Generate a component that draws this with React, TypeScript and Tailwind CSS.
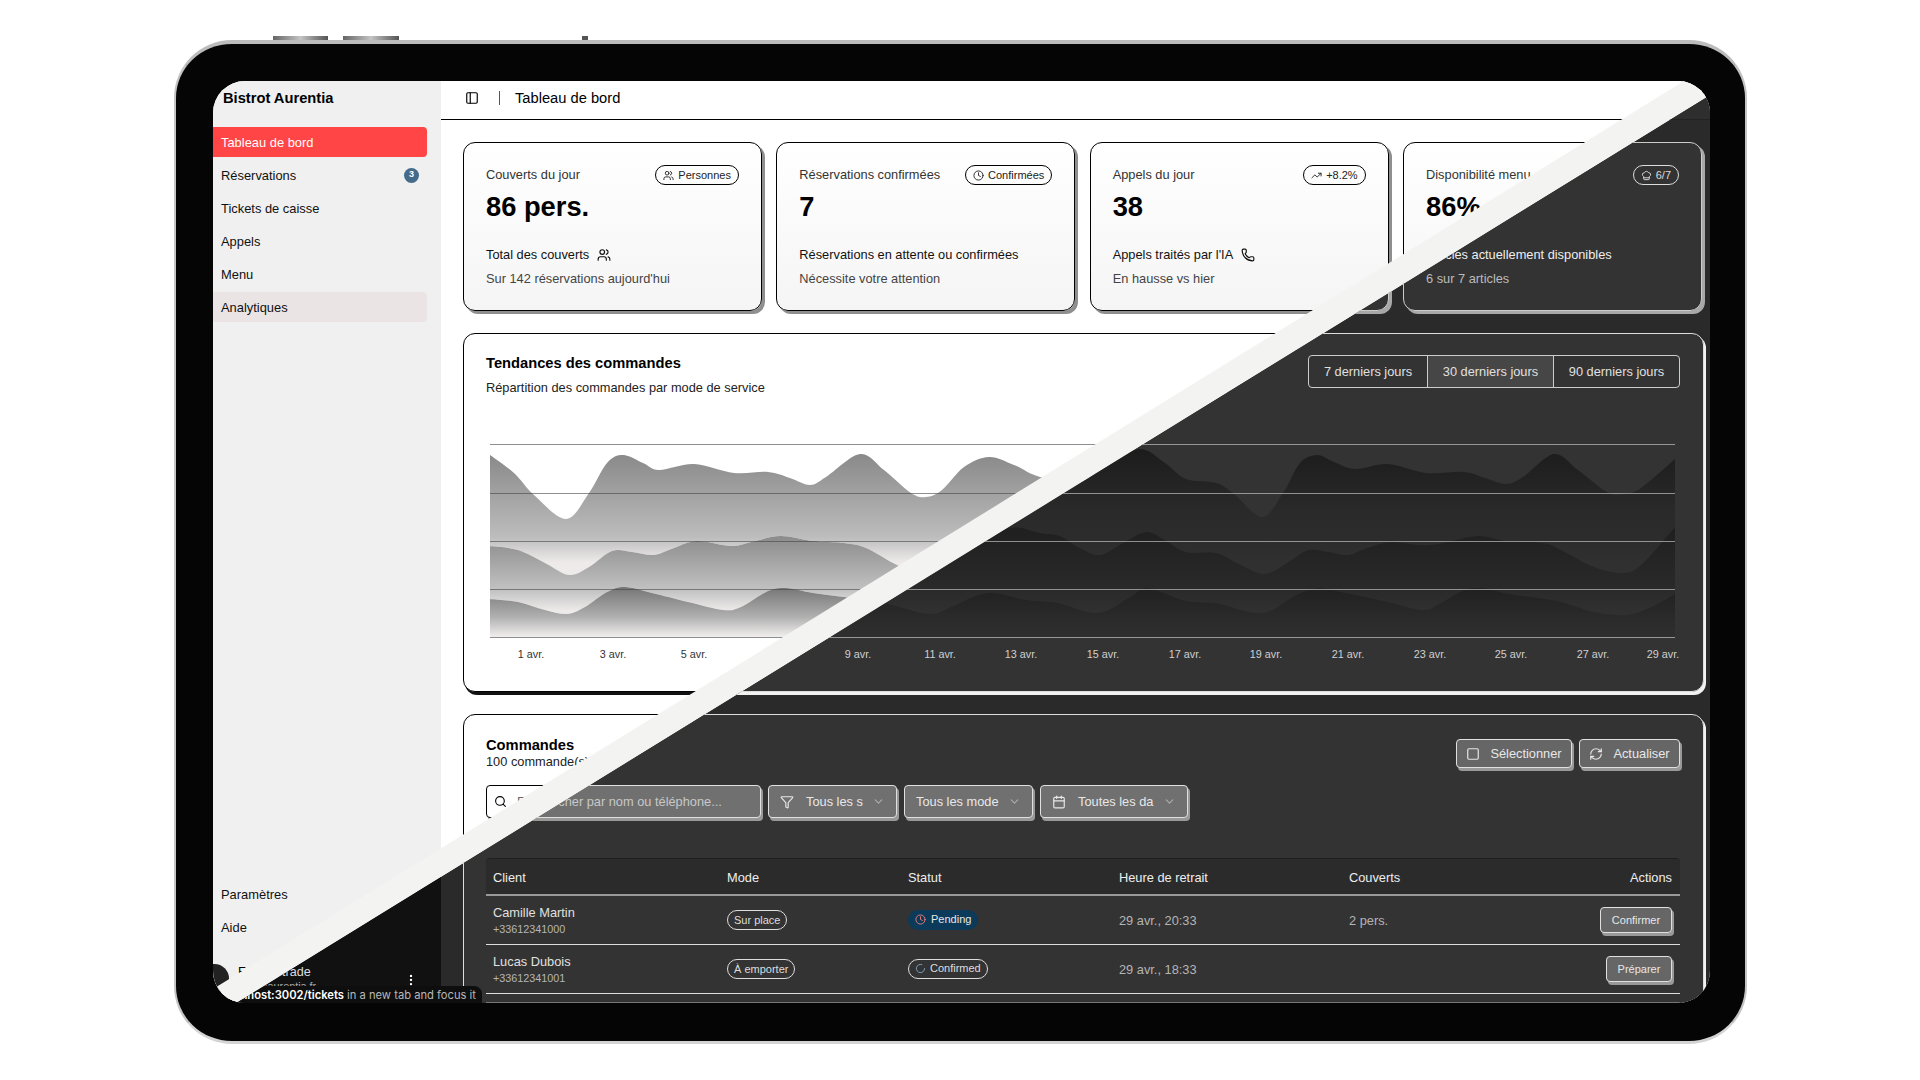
import {
  Calendar,
  ChefHat,
  ChevronDown,
  Clock,
  EllipsisVertical,
  Filter,
  LoaderCircle,
  PanelLeft,
  Phone,
  RefreshCw,
  Search,
  Square,
  TrendingUp,
  Users,
} from 'lucide-react'
import type { ReactNode } from 'react'

type Pt = [number, number]

const curveA: Pt[] = [[0, 11], [24, 29], [44, 51], [76, 75], [99, 49], [117, 19], [133, 11], [153, 19], [169, 26], [204, 20], [244, 29], [278, 28], [300, 34], [320, 41], [336, 33], [370, 10], [394, 26], [421, 49], [436, 53], [452, 46], [474, 23], [499, 13], [524, 21], [550, 33], [590, 38], [615, 20], [650, 5], [675, 19], [696, 35], [726, 39], [743, 49], [772, 73], [793, 49], [810, 19], [827, 11], [844, 18], [865, 25], [898, 20], [936, 29], [974, 28], [995, 34], [1016, 40], [1033, 33], [1064, 10], [1088, 26], [1117, 48], [1134, 50], [1151, 44], [1185, 15]]
const curveB: Pt[] = [[0, 102], [28, 106], [55, 119], [79, 131], [99, 123], [122, 107], [142, 108], [164, 111], [184, 104], [207, 97], [242, 102], [265, 97], [291, 92], [323, 97], [354, 99], [376, 104], [407, 121], [436, 132], [480, 105], [519, 84], [550, 89], [570, 92], [590, 104], [610, 111], [633, 99], [656, 88], [675, 96], [696, 108], [726, 109], [747, 119], [774, 130], [797, 119], [818, 106], [839, 108], [858, 111], [877, 104], [902, 98], [940, 101], [987, 92], [1016, 97], [1054, 99], [1075, 108], [1104, 123], [1132, 129], [1151, 121], [1185, 83]]
const curveC: Pt[] = [[0, 155], [28, 158], [55, 166], [77, 170], [95, 163], [117, 148], [135, 143], [162, 149], [198, 158], [233, 166], [251, 163], [278, 147], [296, 144], [323, 149], [354, 153], [394, 159], [439, 170], [461, 163], [497, 149], [537, 156], [568, 159], [608, 169], [640, 153], [658, 144], [696, 157], [726, 159], [772, 169], [806, 151], [829, 144], [856, 149], [894, 157], [932, 166], [949, 160], [974, 146], [993, 144], [1020, 150], [1067, 157], [1104, 168], [1136, 171], [1159, 164], [1185, 150]]

const ticks: [string, number][] = [['1 avr.', 41], ['3 avr.', 123], ['5 avr.', 204], ['7 avr.', 286], ['9 avr.', 368], ['11 avr.', 450], ['13 avr.', 531], ['15 avr.', 613], ['17 avr.', 695], ['19 avr.', 776], ['21 avr.', 858], ['23 avr.', 940], ['25 avr.', 1021], ['27 avr.', 1103], ['29 avr.', 1173]]

// catmull-rom to bezier, same smoothing feel as a monotone area chart
function smooth(pts: Pt[]) {
  let d = ''
  for (let i = 0; i < pts.length - 1; i++) {
    const p0 = pts[Math.max(i - 1, 0)]
    const p1 = pts[i]
    const p2 = pts[i + 1]
    const p3 = pts[Math.min(i + 2, pts.length - 1)]
    const c1x = p1[0] + (p2[0] - p0[0]) / 6
    const c1y = p1[1] + (p2[1] - p0[1]) / 6
    const c2x = p2[0] - (p3[0] - p1[0]) / 6
    const c2y = p2[1] - (p3[1] - p1[1]) / 6
    d += ` C${c1x} ${c1y} ${c2x} ${c2y} ${p2[0]} ${p2[1]}`
  }
  return d
}

function band(top: Pt[], bottom: Pt[]) {
  const rev = [...bottom].reverse()
  return `M${top[0][0]} ${top[0][1]}${smooth(top)} L${rev[0][0]} ${rev[0][1]}${smooth(rev)} Z`
}

function Chart({ dark }: { dark: boolean }) {
  const p = dark ? 'd' : 'l'
  const floor: Pt[] = [[0, 193], [1185, 193]]
  return (
    <svg width="1200" height="232" className="mt-[47px] ml-[26px] block overflow-visible">
      <defs>
        <linearGradient id={`${p}a`} gradientUnits="userSpaceOnUse" x1="0" y1="5" x2="0" y2="131">
          <stop offset="0" stopColor={dark ? '#1c1c1c' : '#868686'} />
          <stop offset="0.5" stopColor={dark ? '#2a2a2a' : '#adadad'} />
          <stop offset="0.7" stopColor={dark ? '#2c2c2c' : '#bdbdbd'} />
          <stop offset="0.9" stopColor={dark ? '#303030' : '#eeeaea'} />
        </linearGradient>
        <linearGradient id={`${p}b`} gradientUnits="userSpaceOnUse" x1="0" y1="88" x2="0" y2="171">
          <stop offset="0" stopColor={dark ? '#202020' : '#878787'} />
          <stop offset="0.7" stopColor={dark ? '#2a2a2a' : '#c2c2c2'} />
          <stop offset="0.95" stopColor={dark ? '#303030' : '#eeeaea'} />
        </linearGradient>
        <linearGradient id={`${p}c`} gradientUnits="userSpaceOnUse" x1="0" y1="143" x2="0" y2="193">
          <stop offset="0" stopColor={dark ? '#202020' : '#757575'} />
          <stop offset="0.6" stopColor={dark ? '#2a2a2a' : '#b0b0b0'} />
          <stop offset="1" stopColor={dark ? '#2f2f2f' : '#f2eeee'} />
        </linearGradient>
      </defs>
      <path d={band(curveA, curveB)} fill={`url(#${p}a)`} />
      <path d={band(curveB, curveC)} fill={`url(#${p}b)`} />
      <path d={band(curveC, floor)} fill={`url(#${p}c)`} />
      {[0, 49, 97, 145, 193].map((y) => (
        <line key={y} x1="0" x2="1185" y1={y + 0.5} y2={y + 0.5} stroke={dark ? '#d8d8d8' : '#444444'} strokeOpacity={0.6} />
      ))}
      {ticks.map(([label, x]) => (
        <text key={label} x={x} y="214" textAnchor="middle" fontSize="10.8" fill={dark ? '#d0d0d0' : '#333333'}>
          {label}
        </text>
      ))}
    </svg>
  )
}

function Badge({ dark, icon, compact, children }: { dark: boolean; icon?: ReactNode; compact?: boolean; children: ReactNode }) {
  return (
    <span className={`inline-flex h-5 items-center gap-1 rounded-full border text-[11px] whitespace-nowrap ${compact ? 'px-[6px]' : 'px-[7px]'} ${dark ? 'border-[#dddddd] text-[#dddddd]' : 'border-black text-[#222222]'}`}>
      {icon}
      {children}
    </span>
  )
}

function StatCard({ dark, title, value, badge, badgeIcon, line, lineIcon, sub }: {
  dark: boolean
  title: string
  value: string
  badge: string
  badgeIcon: ReactNode
  line: string
  lineIcon?: ReactNode
  sub: string
}) {
  return (
    <div className={`h-[169px] rounded-xl border px-[22px] pt-[23px] ${dark ? 'border-[#cccccc] bg-[#333333] shadow-[3px_3px_0_#a8a8a8]' : 'border-black bg-linear-to-b from-white to-[#f5f5f5] shadow-[3px_3px_0_#8f8f8f]'}`}>
      <div className="flex h-5 items-center justify-between">
        <span className={`-mt-[2px] text-[12.8px] ${dark ? 'text-[#cccccc]' : 'text-[#333333]'}`}>{title}</span>
        <span className="-mt-[1px]">
          <Badge dark={dark} icon={badgeIcon}>{badge}</Badge>
        </span>
      </div>
      <div className={`mt-[6px] h-[30px] text-[27.3px] leading-[30px] font-bold ${dark ? 'text-white' : 'text-black'}`}>{value}</div>
      <div className={`mt-[25px] flex h-4 items-center gap-2 text-[12.8px] ${dark ? 'text-[#eeeeee]' : 'text-[#111111]'}`}>
        <span>{line}</span>
        {lineIcon}
      </div>
      <div className={`mt-2 h-4 text-[12.8px] leading-4 ${dark ? 'text-[#bbbbbb]' : 'text-[#444444]'}`}>{sub}</div>
    </div>
  )
}

function NavItem({ label, state, badge, dark }: { label: string; state?: 'active' | 'soft'; badge?: string; dark: boolean }) {
  let tone = dark ? 'text-[#dddddd]' : 'text-[#111111]'
  if (state === 'active') tone = 'bg-[#ff4545] text-white'
  if (state === 'soft') tone = dark ? 'bg-[#2a2626] text-[#dddddd]' : 'bg-[#ebe4e4] text-[#111111]'
  return (
    <div className={`-ml-[4px] flex h-[30px] items-center justify-between rounded-[4px] pr-[8px] pl-[12px] text-[12.9px] ${tone}`}>
      <span className="pt-px">{label}</span>
      {badge && <span className="flex h-[15px] w-[15px] items-center justify-center rounded-full bg-[#456b8b] text-[9px] font-bold text-white">{badge}</span>}
    </div>
  )
}

function SelectBox({ dark, className, icon, label }: { dark: boolean; className: string; icon?: ReactNode; label: string }) {
  return (
    <div className={`flex h-[33px] items-center rounded-[4px] border px-[11px] text-[12.8px] ${className} ${dark ? 'border-[#e0e0e0] bg-[#707070] text-[#e8e8e8] shadow-[2px_3px_0_#999999]' : 'border-black bg-white text-black shadow-[2px_3px_0_#999999]'}`}>
      {icon}
      <span className="flex-1 pt-px whitespace-nowrap">{label}</span>
      <ChevronDown size={13} className="opacity-50" />
    </div>
  )
}

function ActionButton({ dark, className, children }: { dark: boolean; className: string; children: ReactNode }) {
  return (
    <div className={`flex items-center justify-center rounded-[4px] border ${className} ${dark ? 'border-[#e0e0e0] bg-[#666666] text-[#e8e8e8] shadow-[2px_3px_0_#999999]' : 'border-black bg-white text-black shadow-[2px_3px_0_#999999]'}`}>
      {children}
    </div>
  )
}

function OrderRow({ dark, name, phone, mode, status, time, covers, action, actionWidth }: {
  dark: boolean
  name: string
  phone: string
  mode: string
  status: ReactNode
  time: string
  covers: string
  action: string
  actionWidth: string
}) {
  return (
    <div className={`grid h-[49px] grid-cols-[234px_181px_211px_230px_1fr] items-center border-b text-[12.8px] ${dark ? 'border-[#dddddd]' : 'border-black'}`}>
      <div className="pt-px pl-[7px]">
        <div className={`leading-[16px] ${dark ? 'text-[#e0e0e0]' : 'text-black'}`}>{name}</div>
        <div className={`text-[10.8px] leading-[16px] ${dark ? 'text-[#b5b5b5]' : 'text-[#444444]'}`}>{phone}</div>
      </div>
      <div className="pl-[7px]">
        <Badge dark={dark} compact>{mode}</Badge>
      </div>
      <div className="pl-[7px]">{status}</div>
      <div className={`pt-px pl-[7px] ${dark ? 'text-[#b5b5b5]' : 'text-[#444444]'}`}>{time}</div>
      <div className="flex items-center pr-[8px]">
        <span className={`flex-1 pt-px pl-[7px] ${dark ? 'text-[#b5b5b5]' : 'text-[#444444]'}`}>{covers}</span>
        <ActionButton dark={dark} className={`h-[26px] text-[11px] ${actionWidth}`}>{action}</ActionButton>
      </div>
    </div>
  )
}

function Dashboard({ dark }: { dark: boolean }) {
  const text = dark ? 'text-white' : 'text-black'
  const muted = dark ? 'text-[#d0d0d0]' : 'text-[#222222]'
  const panel = dark
    ? 'border-[#dddddd] bg-[#333333] shadow-[2px_3px_0_#f2f2f2]'
    : 'border-black bg-white shadow-[2px_3px_0_#111111]'

  return (
    <div className={`flex h-[922px] w-[1497px] overflow-hidden ${dark ? 'bg-[#2a2a2a]' : 'bg-white'}`}>
      <aside className={`relative flex w-[228px] shrink-0 flex-col ${dark ? 'bg-[#111111]' : 'bg-[#f0f0f0]'}`}>
        <div className={`ml-[10px] flex h-[46px] items-start pt-[6px] text-[14.7px] font-bold ${text}`}>Bistrot Aurentia</div>
        <nav className="flex flex-col gap-[3px] pr-[14px]">
          <NavItem dark={dark} label="Tableau de bord" state="active" />
          <NavItem dark={dark} label="Réservations" badge="3" />
          <NavItem dark={dark} label="Tickets de caisse" />
          <NavItem dark={dark} label="Appels" />
          <NavItem dark={dark} label="Menu" />
          <NavItem dark={dark} label="Analytiques" state="soft" />
        </nav>
        <div className="mt-auto flex flex-col gap-[3px] pr-[14px]">
          <NavItem dark={dark} label="Paramètres" />
          <NavItem dark={dark} label="Aide" />
          <div className="mt-[19px] flex items-center pr-[9px] pb-[10px]">
            <div className={`-ml-[13px] h-[29px] w-[29px] shrink-0 rounded-full ${dark ? 'border border-[#555555] bg-[#333333]' : 'bg-[#222222]'}`} />
            <div className="ml-[9px] flex-1 pt-px">
              <div className={`text-[12.6px] leading-[15px] ${dark ? 'text-[#dddddd]' : 'text-black'}`}>Fred Estrade</div>
              <div className={`text-[10.8px] leading-[13px] ${dark ? 'text-[#aaaaaa]' : 'text-[#444444]'}`}>fred@aurentia.fr</div>
            </div>
            <EllipsisVertical size={14} className={`mt-[3px] ${dark ? 'text-white' : 'text-black'}`} />
          </div>
        </div>
        {dark && (
          <div className="absolute bottom-0 -right-[41px] z-10 flex h-[17px] items-center rounded-t-lg bg-[#0e0e0e] pt-[2px] pr-[6px] pl-3 font-['Inter',sans-serif] text-[11.2px] whitespace-nowrap text-[#b8b8b8]">
            <span className="font-semibold text-white">http://localhost:3002/tickets</span>
            &nbsp;in a new tab and focus it
          </div>
        )}
      </aside>

      <main className="flex min-w-0 flex-1 flex-col">
        <header className={`flex h-[39px] shrink-0 items-center border-b pb-[4px] pl-[24px] ${dark ? 'border-[#222222] bg-[#2e2e2e]' : 'border-black bg-white'}`}>
          <PanelLeft size={14} className={text} />
          <div className={`mr-[15px] ml-[20px] h-[14px] w-px ${dark ? 'bg-[#888888]' : 'bg-[#555555]'}`} />
          <span className={`text-[14.7px] ${text}`}>Tableau de bord</span>
        </header>

        <div className="flex flex-col gap-[22px] pt-[22px] pr-[6px] pl-[22px]">
          <div className="grid grid-cols-4 gap-[14.4px] pr-[2px]">
            <StatCard
              dark={dark}
              title="Couverts du jour"
              value="86 pers."
              badge="Personnes"
              badgeIcon={<Users size={11} />}
              line="Total des couverts"
              lineIcon={<Users size={14} />}
              sub="Sur 142 réservations aujourd'hui"
            />
            <StatCard
              dark={dark}
              title="Réservations confirmées"
              value="7"
              badge="Confirmées"
              badgeIcon={<Clock size={11} />}
              line="Réservations en attente ou confirmées"
              sub="Nécessite votre attention"
            />
            <StatCard
              dark={dark}
              title="Appels du jour"
              value="38"
              badge="+8.2%"
              badgeIcon={<TrendingUp size={11} />}
              line="Appels traités par l'IA"
              lineIcon={<Phone size={14} />}
              sub="En hausse vs hier"
            />
            <StatCard
              dark={dark}
              title="Disponibilité menu"
              value="86%"
              badge="6/7"
              badgeIcon={<ChefHat size={11} />}
              line="Articles actuellement disponibles"
              sub="6 sur 7 articles"
            />
          </div>

          <section className={`h-[359px] shrink-0 rounded-xl border ${panel}`}>
            <div className="flex items-start justify-between pt-[21px] pr-[23px] pl-[22px]">
              <div>
                <h2 className={`text-[14.7px] leading-[16px] font-bold ${text}`}>Tendances des commandes</h2>
                <p className={`mt-[8px] text-[12.8px] leading-[18px] ${muted}`}>Répartition des commandes par mode de service</p>
              </div>
              <div className={`flex h-[33px] rounded-[4px] border pt-px text-[12.8px] ${dark ? 'border-[#cccccc] text-[#e0e0e0]' : 'border-black text-black'}`}>
                <div className="flex w-[118px] items-center justify-center">7 derniers jours</div>
                <div className={`-mt-px flex w-[127px] items-center justify-center border-x pt-px ${dark ? 'border-[#cccccc] bg-[#464646]' : 'border-black bg-[#eeeeee]'}`}>30 derniers jours</div>
                <div className="flex w-[125px] items-center justify-center">90 derniers jours</div>
              </div>
            </div>
            <Chart dark={dark} />
          </section>

          <section className={`h-[400px] shrink-0 rounded-xl border pr-[23px] pl-[22px] ${panel}`}>
            <div className="flex items-start justify-between pt-[22px]">
              <div>
                <h2 className={`text-[14.7px] leading-[16px] font-bold ${text}`}>Commandes</h2>
                <p className={`text-[12.8px] leading-[18px] ${muted}`}>100 commande(s)</p>
              </div>
              <div className="mt-[2px] flex gap-[7px] text-[12.8px]">
                <ActionButton dark={dark} className="h-[29px] w-[116px] gap-[10px]">
                  <Square size={14} />
                  <span className="pt-px">Sélectionner</span>
                </ActionButton>
                <ActionButton dark={dark} className="h-[29px] w-[101px] gap-[10px]">
                  <RefreshCw size={14} />
                  <span className="pt-px">Actualiser</span>
                </ActionButton>
              </div>
            </div>

            <div className="mt-[14px] flex gap-[7px]">
              <div className={`flex h-[33px] w-[275px] items-center rounded-[4px] border pl-[7px] text-[12.8px] ${dark ? 'border-[#e0e0e0] bg-[#707070] text-[#c8c8c8] shadow-[2px_3px_0_#999999]' : 'border-black bg-white text-[#666666] shadow-[2px_3px_0_#999999]'}`}>
                <Search size={13} className={`mr-[10px] ${text}`} />
                <span className="pt-px">Rechercher par nom ou téléphone...</span>
              </div>
              <SelectBox dark={dark} className="w-[129px]" icon={<Filter size={14} className="mr-[12px]" />} label="Tous les s" />
              <SelectBox dark={dark} className="w-[129px]" label="Tous les mode" />
              <SelectBox dark={dark} className="w-[148px]" icon={<Calendar size={14} className="mr-[12px]" />} label="Toutes les da" />
            </div>

            <div className={`mt-[40px] rounded-t-[4px] border-t ${dark ? 'border-[#1e1e1e]' : 'border-black'}`}>
              <div className={`grid h-[37px] grid-cols-[234px_181px_211px_230px_1fr] items-center rounded-t-[4px] border-b-2 pt-[2px] text-[12.8px] ${dark ? 'border-[#999999] bg-[#2b2b2b] text-[#eeeeee]' : 'border-black bg-white text-black'}`}>
                <div className="pl-[7px]">Client</div>
                <div className="pl-[7px]">Mode</div>
                <div className="pl-[7px]">Statut</div>
                <div className="pl-[7px]">Heure de retrait</div>
                <div className="flex justify-between pr-[8px] pl-[7px]">
                  <span>Couverts</span>
                  <span>Actions</span>
                </div>
              </div>
              <OrderRow
                dark={dark}
                name="Camille Martin"
                phone="+33612341000"
                mode="Sur place"
                status={
                  <span className="inline-flex h-5 items-center gap-[5px] rounded-full bg-[#0b3a5b] px-[7px] text-[11px] text-[#e8e8e8]">
                    <Clock size={11} className="text-[#f08078]" />
                    Pending
                  </span>
                }
                time="29 avr., 20:33"
                covers="2 pers."
                action="Confirmer"
                actionWidth="w-[72px]"
              />
              <OrderRow
                dark={dark}
                name="Lucas Dubois"
                phone="+33612341001"
                mode="À emporter"
                status={<Badge dark={dark} compact icon={<LoaderCircle size={11} className="text-[#7fa6c4]" />}>Confirmed</Badge>}
                time="29 avr., 18:33"
                covers=""
                action="Préparer"
                actionWidth="w-[66px]"
              />
              <div className={`h-[9px] border-b ${dark ? 'border-[#777777]' : 'border-black'}`} />
            </div>
          </section>
        </div>
      </main>
    </div>
  )
}

export default function App() {
  return (
    <div className="h-[1080px] w-[1920px] overflow-hidden bg-white pt-[40px] pl-[174px] font-['Liberation_Sans',Arial,sans-serif]">
      <div className="relative box-border h-[1004px] w-[1573px] rounded-[58px] border-x-2 border-t-4 border-b-[3px] border-x-[#c4c4c4] border-t-[#bcbcbc] border-b-[#d4d4d4] bg-[#050505] pt-[37px] pr-[36px] pl-[37px]">
        {/* hardware buttons on the top edge */}
        <div className="absolute -top-[8px] left-[97px] h-[4px] w-[55px] bg-linear-to-r from-[#666666] via-[#c4c4c4] to-[#555555]" />
        <div className="absolute -top-[8px] left-[167px] h-[4px] w-[56px] bg-linear-to-r from-[#666666] via-[#c4c4c4] to-[#555555]" />
        <div className="absolute -top-[8px] left-[406px] h-[4px] w-[6px] bg-[#555555]" />

        <div className="relative h-[922px] w-[1497px] overflow-hidden rounded-[32px]">
          <Dashboard dark={false} />
          {/* dark theme half, cut along the diagonal */}
          <div className="absolute inset-0 [clip-path:polygon(1497px_14px,1497px_922px,23px_922px)]">
            <Dashboard dark />
          </div>
          <div className="absolute inset-0 bg-[#f3f3f1] [clip-path:polygon(1471px_0,1497px_0,1497px_14px,23px_922px,0_922px,0_908px)]" />
        </div>
      </div>
    </div>
  )
}
